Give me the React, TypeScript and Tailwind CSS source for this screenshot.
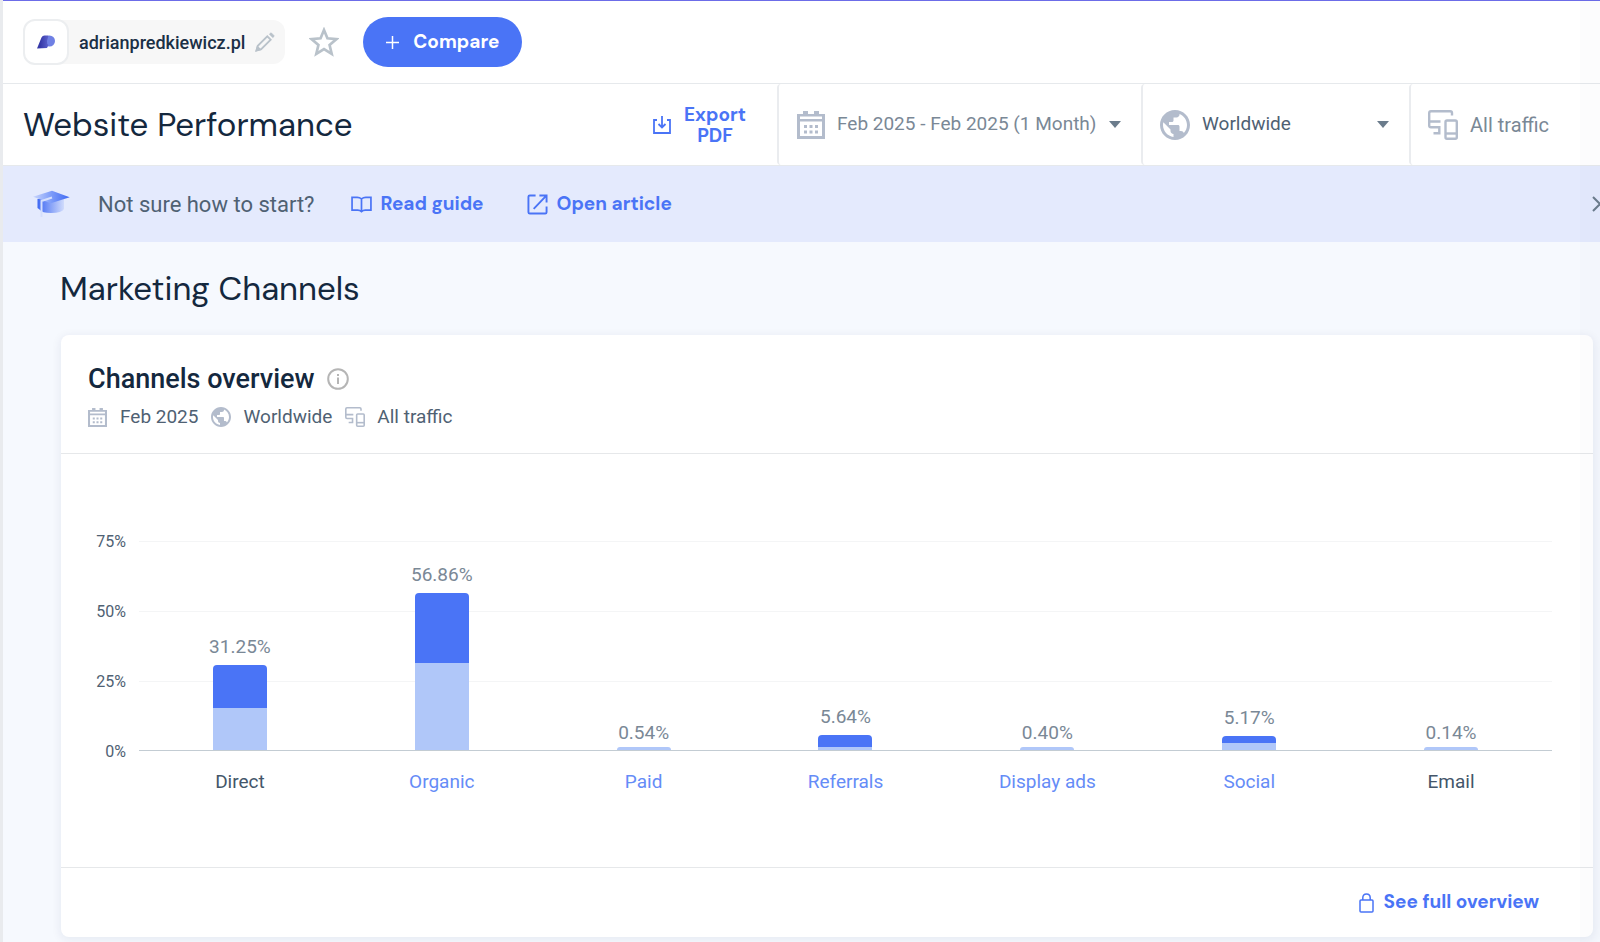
import React from "react";

interface Channel {
  name: string;
  label: string;
  top: number;
  bottom: number;
  link: boolean;
}

const channels: Channel[] = [
  { name: "Direct", label: "31.25%", top: 43, bottom: 42, link: false },
  { name: "Organic", label: "56.86%", top: 70, bottom: 87, link: true },
  { name: "Paid", label: "0.54%", top: 0, bottom: 3, link: true },
  { name: "Referrals", label: "5.64%", top: 12, bottom: 3, link: true },
  { name: "Display ads", label: "0.40%", top: 0, bottom: 3, link: true },
  { name: "Social", label: "5.17%", top: 7, bottom: 7, link: true },
  { name: "Email", label: "0.14%", top: 0, bottom: 3, link: false },
];

const ticks = ["75%", "50%", "25%"];

interface IconProps {
  className?: string;
}

const CalendarIcon: React.FC<IconProps> = ({ className }) => (
  <svg viewBox="0 0 28 28" className={className} fill="currentColor" aria-hidden="true">
    <path fillRule="evenodd" d="M0 3h6V0h5v3h6V0h5v3h6v25H0zM3 5.500v2.500h22V5.500zM3 10.500v14.500h22V10.500z" />
    <path d="M7 14h3v3H7zM12.500 14h3v3h-3zM18 14h3v3h-3zM7 19.500h3v3H7zM12.500 19.500h3v3h-3zM18 19.500h3v3h-3z" />
  </svg>
);

const GlobeIcon: React.FC<IconProps> = ({ className }) => (
  <svg viewBox="2 2 20 20" className={className} fill="currentColor" aria-hidden="true">
    <path d="M12 2C6.480 2 2 6.480 2 12s4.480 10 10 10 10-4.480 10-10S17.520 2 12 2zm-1 17.930c-3.950-.490-7-3.850-7-7.930 0-.620.080-1.210.210-1.790L9 15v1c0 1.100.900 2 2 2v1.930zm6.900-2.540c-.260-.810-1-1.390-1.900-1.390h-1v-3c0-.550-.450-1-1-1H8v-2h2c.550 0 1-.450 1-1V7h2c1.100 0 2-.900 2-2v-.410c2.930 1.190 5 4.060 5 7.410 0 2.080-.800 3.970-2.100 5.390z" />
  </svg>
);

const DevicesIcon: React.FC<IconProps> = ({ className }) => (
  <svg viewBox="0 0 30 30" className={className} fill="none" stroke="currentColor" strokeWidth="2.400" aria-hidden="true">
    <path d="M24 5.500V3q0-1.800-1.800-1.800H3Q1.200 1.200 1.200 3v12.500q0 1.800 1.800 1.800h9.500M1.200 11.500h11.300M11.300 16.100v7.200M5.500 23.300h7" />
    <rect x="17.500" y="10.500" width="11.300" height="18.300" rx="1.500" />
    <path d="M17.500 23.500h11.300" />
  </svg>
);

const Caret: React.FC = () => (
  <svg viewBox="0 0 12 7" className="h-[7px] w-3 shrink-0" fill="#6b7c8c" aria-hidden="true">
    <path d="M0 0h12L6 7z" />
  </svg>
);

const SiteBar: React.FC = () => (
  <header className="flex h-[84px] items-center border-t border-b border-t-[#6c6ce8] border-b-[#e6e9ec] px-5">
    <div className="flex h-11 items-center rounded-xl bg-[#f7f7f7]">
      <span className="flex size-[46px] items-center justify-center rounded-xl border-2 border-[#eceef0] bg-white">
        <svg viewBox="0 0 18 14" className="h-3.5 w-[18px]" aria-hidden="true">
          <defs>
            <linearGradient id="site" x1="0" x2="1">
              <stop offset="0.300" stopColor="#3639a8" />
              <stop offset="1" stopColor="#5c62cd" />
            </linearGradient>
          </defs>
          <circle cx="12.500" cy="6" r="5.500" fill="#6f80e4" />
          <path d="M0 13.500 4.500 2.500Q5.500 .600 7.500 .600H11.500L10 6q-.300 3 1.500 4l-1.500 3z" fill="url(#site)" />
        </svg>
      </span>
      <span className="ml-2.5 text-[18px] font-medium text-[#1b3046]">adrianpredkiewicz.pl</span>
      <button type="button" aria-label="Edit website" className="mx-2.5 text-[#b9c2ca]">
        <svg viewBox="0 0 20 20" className="size-5" fill="none" stroke="currentColor" strokeWidth="1.800" aria-hidden="true">
          <path d="M1.500 18.500 2.800 13.800 12.300 4.300l3.400 3.400L6.200 17.200z" />
          <path d="M1.500 18.500 2.500 15l2.500 2.500z" fill="currentColor" />
          <path d="M14.300 2.200 15.500 1q.500-.500 1 0L19 3.500q.500.500 0 1l-1.200 1.200z" fill="currentColor" strokeWidth="0.500" />
        </svg>
      </button>
    </div>
    <button type="button" aria-label="Add to favourites" className="ml-6 text-[#b9c2ca]">
      <svg viewBox="1 1 28 28" className="size-[30px]" fill="none" stroke="currentColor" strokeWidth="2.500" aria-hidden="true">
        <path d="m15 3.800 3.200 7.800 8.500.700-6.500 5.500 2 8.300-7.200-4.500-7.200 4.500 2-8.300-6.500-5.500 8.500-.700z" />
      </svg>
    </button>
    <button type="button" className="ml-6 flex h-[50px] items-center gap-3.5 rounded-full bg-[#4a74f6] px-[23px] font-['DM_Sans',Inter,sans-serif] text-[19px] font-bold text-white">
      <svg viewBox="0 0 14 14" className="size-[13px]" stroke="currentColor" strokeWidth="1.600" aria-hidden="true">
        <path d="M7 0v14M0 7h14" />
      </svg>
      Compare
    </button>
  </header>
);

const FilterBar: React.FC = () => (
  <div className="flex h-[82px] items-stretch border-b border-[#e6e9ec] text-[19px]">
    <h1 className="flex flex-1 items-center pl-5 font-['DM_Sans',Inter,sans-serif] text-[33px] text-[#14283e]">
      Website Performance
    </h1>
    <button type="button" className="flex w-[154px] items-center gap-3 pl-[30px] font-['DM_Sans',Inter,sans-serif] leading-[21px] font-bold text-[#4a74f6]">
      <svg viewBox="0 0 18 18" className="size-[18px] shrink-0" fill="none" stroke="currentColor" strokeWidth="1.800" aria-hidden="true">
        <path d="M4 4H1v13h16V4h-3M9 0v11M5.500 8 9 11.500 12.500 8" />
      </svg>
      <span className="w-16 text-center">Export PDF</span>
    </button>
    <button type="button" className="flex w-[364px] items-center rounded-l border-l-2 border-[#eaecef] pr-5 pl-[18px] text-[#7a8896]">
      <CalendarIcon className="size-7 text-[#b3bccc]" />
      <span className="ml-3 flex-1 text-left whitespace-nowrap">Feb 2025 - Feb 2025 (1 Month)</span>
      <Caret />
    </button>
    <button type="button" className="flex w-[268px] items-center rounded-l border-l-2 border-[#eaecef] pr-5 pl-[17px] text-[#4f6173]">
      <GlobeIcon className="size-[30px] text-[#b3bccc]" />
      <span className="ml-3 flex-1 text-left">Worldwide</span>
      <Caret />
    </button>
    <button type="button" className="flex w-[191px] items-center gap-3 rounded-l border-l-2 border-[#eaecef] pl-[17px] text-[20px] text-[#7a8896]">
      <DevicesIcon className="size-[30px] text-[#b3bccc]" />
      All traffic
    </button>
  </div>
);

const GuideBanner: React.FC = () => (
  <div className="flex h-[76px] items-center overflow-hidden bg-[#e4eafd] pl-[30px] font-['DM_Sans',Inter,sans-serif] text-[19px] font-bold text-[#4a74f6]">
    <svg viewBox="0 0 37 28" className="h-7 w-[37px]" aria-hidden="true">
      <defs>
        <linearGradient id="cap" x1="0" x2="1">
          <stop offset="0" stopColor="#c9d6fc" />
          <stop offset="0.500" stopColor="#7d9cf9" />
          <stop offset="1" stopColor="#3f69f3" />
        </linearGradient>
        <linearGradient id="base" x1="0" x2="1">
          <stop offset="0" stopColor="#3f69f3" />
          <stop offset="1" stopColor="#d0dbfc" />
        </linearGradient>
      </defs>
      <path d="M4.500 9v9l2 1.500Q9 23 18 23q11 0 13-4V9z" fill="url(#base)" />
      <path d="M0 6.700 19 .700l17.700 6.600-19 6z" fill="url(#cap)" />
      <path d="M19 7.500 8.500 11v16" fill="none" stroke="#d5dffd" strokeWidth="2" />
    </svg>
    <span className="ml-7 font-[Roboto,sans-serif] text-[22px] font-normal text-[#4f6173]">Not sure how to start?</span>
    <a href="#guide" className="ml-9 flex items-center gap-[9px]">
      <svg viewBox="0 0 22 18" className="h-[17px] w-[21px]" fill="none" stroke="currentColor" strokeWidth="1.800" aria-hidden="true">
        <path d="M11 3Q9 1.500 6.500 1.500H1v13.500h6q2.500 0 4 1.500 1.500-1.500 4-1.500h6V1.500h-5.500Q13 1.500 11 3zv13" />
      </svg>
      Read guide
    </a>
    <a href="#article" className="ml-[43px] flex items-center gap-[9px]">
      <svg viewBox="0 0 22 22" className="size-[21px]" fill="none" stroke="currentColor" strokeWidth="2" aria-hidden="true">
        <path d="M9 1.500H3Q1.500 1.500 1.500 3v16q0 1.500 1.500 1.500h16q1.500 0 1.500-1.500v-6M13 1.500h7.500V9M20.500 1.500 7 15.500" />
      </svg>
      Open article
    </a>
    <button type="button" aria-label="Close" className="-mr-2 ml-auto text-[#6b7c8c]">
      <svg viewBox="0 0 16 16" className="size-4" fill="none" stroke="currentColor" strokeWidth="2" aria-hidden="true">
        <path d="m1 1 14 14M15 1 1 15" />
      </svg>
    </button>
  </div>
);

const ChannelChart: React.FC = () => (
  <div className="grid grid-cols-[48px_1fr] pt-[52px] pr-[41px] pl-[30px]">
    <div className="text-[16px] text-[#4f6173]">
      {ticks.map((tick) => (
        <div key={tick} className="h-[70px] pr-[13px] text-right">
          {tick}
        </div>
      ))}
      <div className="pr-[13px] text-right">0%</div>
    </div>
    <div className="mt-[11px]">
      <div className="relative h-[210px] border-b border-[#c3ccd3]">
        {ticks.map((tick) => (
          <div key={tick} className="h-[70px] border-t border-[#f4f5f6]" />
        ))}
        <div className="absolute inset-0 grid grid-cols-7">
          {channels.map((channel) => (
            <div key={channel.name} className="flex flex-col items-center justify-end text-[19px] text-[#7a8896]">
              <span className={channel.top === 0 ? "mb-0" : "mb-1"}>{channel.label}</span>
              <div className="w-[54px] overflow-hidden rounded-t">
                <div className="bg-[#4a74f6]" style={{ height: channel.top }} />
                <div className="bg-[#b0c7f9]" style={{ height: channel.bottom }} />
              </div>
            </div>
          ))}
        </div>
      </div>
      <div className="mt-[17px] grid grid-cols-7 text-center text-[19px] text-[#44566a]">
        {channels.map((channel) =>
          channel.link ? (
            <a key={channel.name} href="#channel" className="text-[#658cf7]">
              {channel.name}
            </a>
          ) : (
            <span key={channel.name}>{channel.name}</span>
          )
        )}
      </div>
    </div>
  </div>
);

const ChannelsCard: React.FC = () => (
  <section className="mt-[23px] mr-[7px] ml-[58px] rounded-lg bg-white shadow-[0_2px_8px_2px_rgba(20,40,80,0.06)]">
    <div className="border-b border-[#e6e8ea] px-[27px] pt-[26px] pb-[22px]">
      <h3 className="flex items-center text-[27px] leading-9 font-medium text-[#14283e]">
        Channels overview
        <svg viewBox="0 0 22 22" className="ml-3 size-[22px]" fill="none" stroke="#b5b5b5" strokeWidth="2" aria-hidden="true">
          <circle cx="11" cy="11" r="9.800" />
          <path d="M11 9.500V16M11 6v2" />
        </svg>
      </h3>
      <div className="mt-1.5 flex items-center text-[19px] leading-7 text-[#4f6173]">
        <CalendarIcon className="mr-[13px] size-[19px] text-[#b3bccc]" />
        Feb 2025
        <GlobeIcon className="mr-3 ml-[13px] size-5 text-[#b3bccc]" />
        Worldwide
        <DevicesIcon className="mr-3 ml-[13px] size-5 text-[#b3bccc]" />
        All traffic
      </div>
    </div>
    <div className="h-[413px] pt-6">
      <ChannelChart />
    </div>
    <footer className="flex h-[70px] items-center justify-end border-t border-[#e6e8ea] pr-[54px]">
      <a href="#overview" className="flex items-center gap-2.5 font-['DM_Sans',Inter,sans-serif] text-[19px] font-bold text-[#4a74f6]">
        <svg viewBox="0 0 15 20" className="h-5 w-[15px]" fill="none" stroke="currentColor" strokeWidth="1.500" aria-hidden="true">
          <rect x="1" y="7" width="13" height="12" rx="1" />
          <path d="M3.800 7V4.800q0-3.800 3.700-3.800t3.700 3.800V7" />
        </svg>
        See full overview
      </a>
    </footer>
  </section>
);

const App: React.FC = () => {
  return (
    <div className="relative min-h-screen border-l-[3px] border-[#e9ebee] bg-[#f6f9fe] font-[Roboto,sans-serif]">
      <div className="bg-white">
        <SiteBar />
        <FilterBar />
      </div>
      <GuideBanner />
      <main className="pt-6 pb-1">
        <h2 className="ml-[57px] font-['DM_Sans',Inter,sans-serif] text-[33px] leading-[46px] text-[#14283e]">Marketing Channels</h2>
        <ChannelsCard />
      </main>
      <div className="pointer-events-none absolute inset-y-0 right-0 w-5 bg-slate-900/[0.01]" />
    </div>
  );
};

export default App;
